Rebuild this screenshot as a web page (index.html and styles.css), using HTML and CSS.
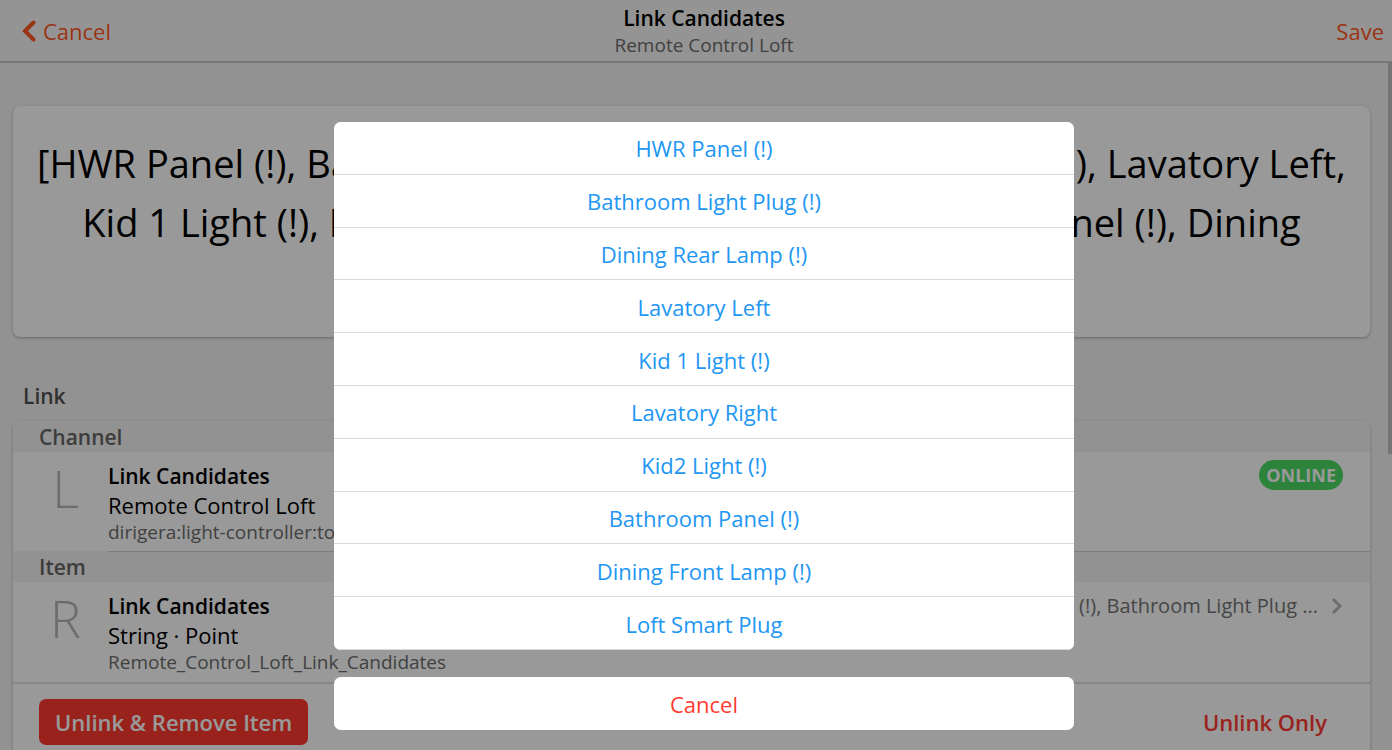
FILE: index.html
```html
<!DOCTYPE html>
<html lang="en">
<head>
<meta charset="utf-8">
<meta name="viewport" content="width=device-width, initial-scale=1">
<title>Link Candidates</title>
<link rel="stylesheet" href="styles.css">
</head>
<body>
<header class="navbar">
  <a class="nav-link" href="#back">
    <svg class="back-icon" viewBox="0 0 14 22" aria-hidden="true"><path d="M11.500 2.500 3 11l8.500 8.500"/></svg>
    <span>Cancel</span>
  </a>
  <div class="nav-title">
    <h1 class="title">Link Candidates</h1>
    <p class="subtitle">Remote Control Loft</p>
  </div>
  <a class="nav-link nav-save" href="#save">Save</a>
</header>
<main class="page">
  <section class="card state">[HWR Panel (!), Bathroom Light Plug (!), Dining Rear Lamp (!), Lavatory Left, Kid 1 Light (!), Lavatory Right, Kid2 Light (!), Bathroom Panel (!), Dining Front Lamp (!), Loft Smart Plug]</section>
  <h2 class="block-title">Link</h2>
  <section class="card list">
    <h3 class="divider">Channel</h3>
    <div class="row">
      <span class="letter">L</span>
      <div class="row-body row-line">
        <div class="row-text">
          <strong class="row-title">Link Candidates</strong>
          <span class="row-sub">Remote Control Loft</span>
          <span class="row-note">dirigera:light-controller:to</span>
        </div>
        <span class="badge">ONLINE</span>
      </div>
    </div>
    <h3 class="divider">Item</h3>
    <a class="row" href="#item">
      <span class="letter">R</span>
      <span class="row-body">
        <span class="row-text">
          <strong class="row-title">Link Candidates</strong>
          <span class="row-sub">String · Point</span>
          <span class="row-note">Remote_Control_Loft_Link_Candidates</span>
        </span>
        <span class="row-after">(!), Bathroom Light Plug ...</span>
        <svg class="chevron" viewBox="0 0 12 18" aria-hidden="true"><path d="M2 2l7 7-7 7"/></svg>
      </span>
    </a>
    <div class="actions">
      <button class="button-fill" type="button">Unlink &amp; Remove Item</button>
      <button class="button-plain" type="button">Unlink Only</button>
    </div>
  </section>
</main>
<div class="scroll-thumb"></div>
<div class="backdrop">
  <div class="sheet" role="dialog" aria-label="Link Candidates">
    <div class="group options">
      <button class="option" type="button">HWR Panel (!)</button>
      <button class="option" type="button">Bathroom Light Plug (!)</button>
      <button class="option" type="button">Dining Rear Lamp (!)</button>
      <button class="option" type="button">Lavatory Left</button>
      <button class="option" type="button">Kid 1 Light (!)</button>
      <button class="option" type="button">Lavatory Right</button>
      <button class="option" type="button">Kid2 Light (!)</button>
      <button class="option" type="button">Bathroom Panel (!)</button>
      <button class="option" type="button">Dining Front Lamp (!)</button>
      <button class="option" type="button">Loft Smart Plug</button>
    </div>
    <div class="group">
      <button class="option cancel" type="button">Cancel</button>
    </div>
  </div>
</div>
</body>
</html>
```
FILE: styles.css
```css
* { box-sizing: border-box; }
html, body { height: 100%; }
body {
  margin: 0;
  overflow: hidden;
  background: #f4f4f4;
  color: #000;
  font-family: "Open Sans", "Noto Sans", sans-serif;
  font-size: 22px;
  line-height: 30px;
}
h1, h2, h3, p { margin: 0; font-size: inherit; }
a { color: inherit; text-decoration: none; }
button { font: inherit; border: 0; cursor: pointer; }
svg { fill: none; stroke: currentColor; flex: none; }

.navbar {
  display: grid;
  grid-template-columns: 1fr auto 1fr;
  align-items: center;
  height: 63px;
  padding: 1px 8px 0 24px;
  background: #f7f7f7;
  border-bottom: 2px solid #c8c8c8;
}
.nav-link { display: flex; align-items: center; gap: 7px; color: #ff5722; }
.nav-save { justify-self: end; }
.back-icon { width: 14px; height: 22px; stroke-width: 4; stroke-linecap: round; margin-left: -2px; }
.nav-title { text-align: center; }
.title { font-size: 21px; font-weight: 600; line-height: 28px; }
.subtitle { font-size: 19px; line-height: 26px; color: #6d6d6d; }

.page { padding: 43px 22px 0 13px; }
.card {
  background: #fff;
  border-radius: 7px;
  box-shadow: 0 1px 3px rgba(0, 0, 0, .3);
}
.state {
  padding: 28px 24px 26px;
  text-align: center;
  font-size: 38px;
  line-height: 59px;
}
.block-title {
  padding: 44px 10px 10px;
  color: #505050;
  font-size: 21px;
  font-weight: 600;
}
.list { overflow: hidden; padding-bottom: 16px; }
.divider {
  padding: 1px 26px 0;
  background: #f4f4f4;
  color: #666;
  font-size: 21px;
  font-weight: 600;
}
.row { display: flex; }
.letter {
  width: 95px;
  padding: 5px 0 0 10px;
  text-align: center;
  font-size: 52px;
  line-height: 62px;
  font-weight: 300;
  color: #b4b4b4;
}
.row-body {
  flex: 1;
  display: flex;
  align-items: flex-start;
  min-height: 99px;
  padding: 8px 27px 0 0;
}
.row-line { min-height: 100px; margin-bottom: -1px; border-bottom: 1px solid #d0d0d0; }
.row-text { flex: 1; display: flex; flex-direction: column; }
.row-title { font-size: 21px; font-weight: 600; line-height: 32px; }
.row-sub { line-height: 27px; }
.row-note { font-size: 19px; line-height: 26px; color: #6d6d6d; }
.badge {
  padding: 0 7px;
  border-radius: 15px;
  background: #4cd964;
  color: #fff;
  font-size: 18px;
  font-weight: 700;
}
.row-after { font-size: 20px; line-height: 32px; color: #757575; }
.chevron { width: 12px; height: 18px; margin: 7px 0 0 13px; stroke-width: 3; color: #b8b8b8; }
.actions {
  display: flex;
  justify-content: space-between;
  align-items: center;
  margin-top: 1px;
  padding: 15px 27px 0 26px;
  border-top: 2px solid #e0e0e0;
}
.button-fill, .button-plain { padding: 8px 16px; border-radius: 7px; font-weight: 600; }
.button-fill { background: #ff3b30; color: #fff; }
.button-plain { background: transparent; color: #ff3b30; }

.scroll-thumb {
  position: absolute;
  top: 63px;
  right: 0;
  width: 4px;
  height: 391px;
  background: #c1c1c1;
}
.backdrop {
  position: fixed;
  inset: 0;
  display: flex;
  justify-content: center;
  align-items: flex-end;
  padding: 0 0 20px 16px;
  background: rgba(0, 0, 0, .4);
}
.sheet {
  width: 100%;
  max-width: 740px;
  display: flex;
  flex-direction: column;
  gap: 27px;
}
.group {
  display: flex;
  flex-direction: column;
  border-radius: 7px;
  overflow: hidden;
  background: #fff;
}
.options { min-height: 528px; }
.option {
  flex: 1;
  min-height: 52px;
  padding: 1px 0 0;
  background: #fff;
  border-bottom: 1px solid #d9d9d9;
  color: #2196f3;
}
.cancel { min-height: 53px; padding: 0; border-bottom: 0; color: #ff3b30; }
```
